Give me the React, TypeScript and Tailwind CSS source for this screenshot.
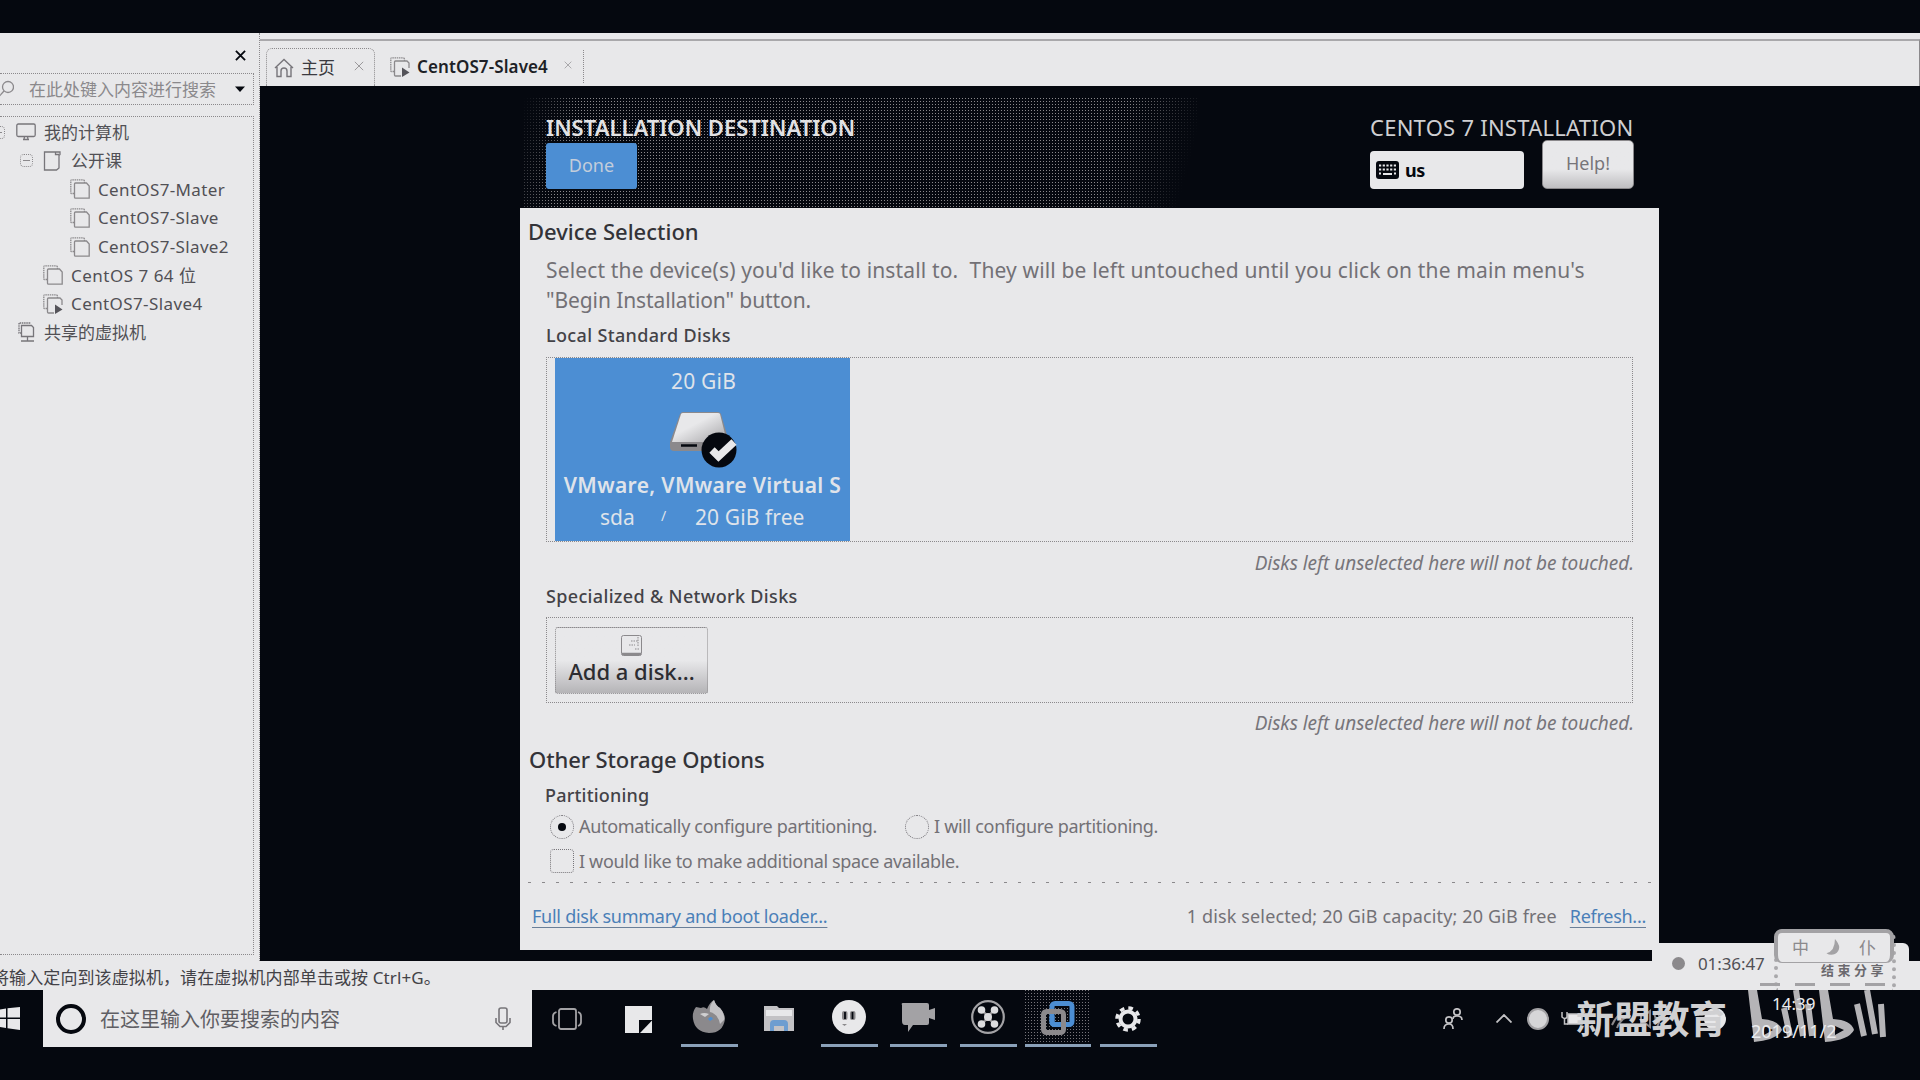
import type { ReactNode } from "react";

const Cross = ({ className }: { className: string }) => (
  <svg viewBox="0 0 12 12" className={className} fill="none" stroke="currentColor">
    <path d="M1 1 11 11M11 1 1 11" />
  </svg>
);

const VmIcon = ({ running = false }: { running?: boolean }) => (
  <svg viewBox="0 0 20 20" className="h-5 w-5 shrink-0" fill="none" stroke="#8b898c" strokeWidth="1.3">
    <path d="M4 14.5H1.5A.8.8 0 0 1 .8 13.7V1.5A.8.8 0 0 1 1.5.8H13A1.5 1.5 0 0 1 14.5 2.3V4" strokeDasharray="1.5 0.7" />
    <path d={running ? "M11 19H5.5a1 1 0 0 1-1-1V5a1 1 0 0 1 1-1H17l2 2v5" : "M5.5 4H16.5L19.2 7V19.2H5.5a1 1 0 0 1-1-1V5a1 1 0 0 1 1-1Z"} />
    {running && <path d="M12 10.5 19.500 15.5 12 20Z" fill="#55545a" stroke="none" />}
  </svg>
);

const ComputerIcon = () => (
  <svg viewBox="0 0 20 18" className="h-[18px] w-5 shrink-0" fill="none" stroke="#77757a" strokeWidth="1.3">
    <rect x=".8" y="1" width="18.4" height="12.5" rx="1.5" />
    <path d="M7 16.5H13M8.5 13.5 8 16.5M11.5 13.5 12 16.5" />
  </svg>
);

const FolderIcon = () => (
  <svg viewBox="0 0 18 20" className="h-5 w-[18px] shrink-0" fill="none" stroke="#77757a" strokeWidth="1.3">
    <path d="M12.5 1H1.5V19H13.5L16 17V4.5L17 3.5V1H12.5V3.5H16" />
  </svg>
);

const SharedIcon = () => (
  <svg viewBox="0 0 18 20" className="h-5 w-[18px] shrink-0" fill="none" stroke="#77757a" strokeWidth="1.3">
    <path d="M3.5 11H1V1H13" strokeDasharray="1.5 .7" />
    <path d="M3.5 3.5H13.5L15.5 5.5V14.5H3.5ZM9.5 14.5V18.5M3 19H16" />
  </svg>
);

const Expander = () => (
  <span className="flex h-[13px] w-[13px] shrink-0 items-center justify-center rounded-sm border border-dotted border-[#8b898c]">
    <span className="h-px w-[7px] bg-[#8b898c]" />
  </span>
);

const TreeRow = ({ indent, gap, icon, children }: { indent: string; gap: string; icon: ReactNode; children: ReactNode }) => (
  <div className={`flex h-[28.6px] items-center whitespace-nowrap ${indent} ${gap}`}>
    {icon}
    <span>{children}</span>
  </div>
);

function Sidebar() {
  return (
    <aside className="flex w-[260px] shrink-0 flex-col border-r border-dotted border-[#8b898c] text-[17px] text-[#515055]">
      <div className="flex h-10 items-end justify-end pr-[13px] pb-3 text-[#05080f]">
        <Cross className="h-[11px] w-[11px] stroke-2" />
      </div>
      <div className="mr-[5px] flex h-8 items-center border border-l-0 border-dotted border-[#8b898c] text-[#8b898c]">
        <svg viewBox="0 0 16 18" className="-ml-0.5 h-[18px] w-4" fill="none" stroke="currentColor" strokeWidth="1.3">
          <circle cx="10" cy="7" r="5.5" />
          <path d="M6 11 1 16.5" />
        </svg>
        <span className="mt-px flex-1 pl-[15px] whitespace-nowrap">在此处键入内容进行搜索</span>
        <svg viewBox="0 0 10 6" className="mr-2 h-1.5 w-2.5" fill="#05080f">
          <path d="M0 .5H10L5 6Z" />
        </svg>
      </div>
      <div className="mt-[11px] mr-[5px] mb-[6px] flex-1 border border-l-0 border-dotted border-[#8b898c] pt-px">
        <div className="-ml-2 flex items-center">
          <Expander />
          <TreeRow indent="pl-[11px]" gap="gap-2" icon={<ComputerIcon />}>我的计算机</TreeRow>
        </div>
        <div className="flex items-center pl-5">
          <Expander />
          <TreeRow indent="pl-[10px]" gap="gap-2.5" icon={<FolderIcon />}>公开课</TreeRow>
        </div>
        <TreeRow indent="pl-[70px]" gap="gap-2 tracking-[0.35px]" icon={<VmIcon />}>CentOS7-Mater</TreeRow>
        <TreeRow indent="pl-[70px]" gap="gap-2 tracking-[0.35px]" icon={<VmIcon />}>CentOS7-Slave</TreeRow>
        <TreeRow indent="pl-[70px]" gap="gap-2 tracking-[0.35px]" icon={<VmIcon />}>CentOS7-Slave2</TreeRow>
        <TreeRow indent="pl-[43px]" gap="gap-2 tracking-[0.5px]" icon={<VmIcon />}>CentOS 7 64 位</TreeRow>
        <TreeRow indent="pl-[43px]" gap="gap-2 tracking-[0.4px]" icon={<VmIcon running />}>CentOS7-Slave4</TreeRow>
        <TreeRow indent="pl-[18px]" gap="gap-2" icon={<SharedIcon />}>共享的虚拟机</TreeRow>
      </div>
    </aside>
  );
}

function TabBar() {
  return (
    <div className="mt-1.5 flex h-[47px] items-end border-t-2 border-r border-t-[#a9a8ab] border-r-[#8b898c] pl-[6px] text-[17px]">
      <div className="flex h-[38px] w-[109px] items-center rounded-t-md border border-b-0 border-dotted border-[#8b898c] pl-[7px] text-[#3b3a40]">
        <svg viewBox="0 0 20 20" className="h-5 w-5" fill="none" stroke="#77757a" strokeWidth="1.4">
          <path d="M1 10 10 1.5 19 10M3 9V18.5H7V13A3 3 0 0 1 13 13V18.5H17V9" />
        </svg>
        <span className="ml-[7px]">主页</span>
        <Cross className="mb-1 ml-[19px] h-2.5 w-2.5 text-[#8b898c]" />
      </div>
      <div className="mb-[3px] flex h-[33px] w-[209px] items-center border-r border-dotted border-[#8b898c] pl-[15px]">
        <VmIcon running />
        <span className="ml-[7px] font-semibold tracking-[0.1px] text-[#1d1f26]">CentOS7-Slave4</span>
        <Cross className="mb-1 ml-4 h-2 w-2 text-[#8b898c]" />
      </div>
    </div>
  );
}

function InstallerHeader() {
  return (
    <div className="relative h-[110px]">
      <div className="absolute inset-y-0 left-1 w-[675px] bg-[radial-gradient(circle_at_0.5px_0.5px,#8b898c_0.5px,transparent_0.6px)] bg-[size:3px_3px] [mask-image:linear-gradient(105deg,transparent_0,#000_8%,#000_86%,transparent_97%)]" />
      <div className="relative flex justify-between pt-4 pr-[25px] pl-[26px]">
        <div>
          <div className="text-[22px] leading-[26px] font-semibold text-[#e2e2e4]">INSTALLATION DESTINATION</div>
          <div className="mt-[3px] flex h-[46px] w-[91px] items-center justify-center rounded-[3px] bg-[#4c8ed3] pb-0.5 text-[18px] text-[#c3cddb]">Done</div>
        </div>
        <div className="w-[264px]">
          <div className="text-[22px] leading-[26px] tracking-[0.25px] whitespace-nowrap text-[#cfcfd2]">CENTOS 7 INSTALLATION</div>
          <div className="flex items-end justify-between">
            <div className="flex h-[38px] w-[154px] items-center gap-1.5 rounded-sm bg-[#e8e8ea] pl-[6px] text-[18px] font-bold text-[#05080f]">
              <svg viewBox="0 0 23 18" className="h-[18px] w-[23px]">
                <rect width="23" height="18" rx="3" fill="#05080f" />
                <path d="M3 4.5H20M3 8.5H20M3 12.5H5M18 12.5H20" stroke="#e8e8ea" strokeWidth="2" strokeDasharray="2.2 1.5" />
                <path d="M7 13H16" stroke="#e8e8ea" strokeWidth="2" />
              </svg>
              <span className="tracking-[-0.5px]">us</span>
            </div>
            <div className="flex h-[49px] w-[92px] items-center justify-center rounded-[5px] border border-[#8b898c] bg-linear-to-b from-[#e8e8ea] from-60% to-[#bfbec1] pb-0.5 text-[18px] text-[#77757a]">Help!</div>
          </div>
        </div>
      </div>
    </div>
  );
}

function DiskTile() {
  return (
    <div className="ml-2 flex h-full w-[295px] flex-col items-center bg-[#4c8ed3] text-[21px] text-[#dfe3ea]">
      <div className="mt-[9px] ml-0.5 leading-[28px] tracking-[0.2px]">20 GiB</div>
      <svg viewBox="0 0 68 58" className="mt-[16px] h-[58px] w-[68px]">
        <defs>
          <linearGradient id="lid" x1="0" y1="0" x2="1" y2="1">
            <stop offset="0.4" stopColor="#e8e8ea" />
            <stop offset="1" stopColor="#a3a2a5" />
          </linearGradient>
        </defs>
        <path d="M11 3Q12 1 14 1H49Q51 1 52 3L60 31V36Q60 40 56 40H5Q1 40 1 36V31Z" fill="#8b898c" />
        <path d="M12 3Q12.5 2 14 2H49Q50.5 2 51 3L58 31H3Z" fill="url(#lid)" />
        <path d="M12 34.5H28" stroke="#05080f" strokeWidth="2.5" />
        <circle cx="50" cy="39" r="17.5" fill="#05080f" />
        <path d="M43 39 49.5 45.500 65 31" fill="none" stroke="#e8e8ea" strokeWidth="7.5" />
      </svg>
      <div className="mt-px leading-[30px] font-semibold tracking-[0.35px]">VMware, VMware Virtual S</div>
      <div className="mt-[2px] flex w-full pl-[45px] leading-[30px]">
        <span className="w-[61px]">sda</span>
        <span className="w-[34px] text-[14px] leading-[28px]">/</span>
        <span className="tracking-[0.1px] whitespace-nowrap">20 GiB free</span>
      </div>
    </div>
  );
}

const UntouchedNote = ({ height }: { height: string }) => (
  <div className={`flex items-center justify-end pr-[25px] pb-px text-[19px] tracking-[-0.04px] text-[#77757a] italic ${height}`}>
    Disks left unselected here will not be touched.
  </div>
);

function Installer() {
  return (
    <div className="ml-[260px] w-[1139px] pt-3">
      <InstallerHeader />
      <div className="flex h-[742px] flex-col bg-[#e8e8ea] text-[#737176]">
        <h1 className="flex h-[46px] shrink-0 items-center pl-[8px] text-[22px] font-medium text-[#333338]">Device Selection</h1>
        <p className="mt-px pl-[26px] text-[21px] leading-[30px] whitespace-nowrap">
          <span className="tracking-[0.15px]">Select the device(s) you'd like to install to.&nbsp; They will be left untouched until you click on the main menu's</span>
          <br />
          <span className="tracking-[-0.1px]">"Begin Installation" button.</span>
        </p>
        <h2 className="flex h-10 shrink-0 items-center pl-[26px] text-[18px] font-medium tracking-[0.35px] text-[#434247]">Local Standard Disks</h2>
        <div className="mt-0.5 mr-[26px] ml-[26px] h-[185px] shrink-0 border border-dotted border-[#8b898c]">
          <DiskTile />
        </div>
        <UntouchedNote height="h-[44px]" />
        <h2 className="flex h-5 shrink-0 items-center pl-[26px] text-[18px] font-medium tracking-[0.34px] text-[#434247]">Specialized &amp; Network Disks</h2>
        <div className="mt-[11px] mr-[26px] ml-[26px] h-[86px] shrink-0 border border-dotted border-[#8b898c] pt-[9px] pl-2">
          <div className="flex h-[67px] w-[153px] flex-col items-center rounded-[3px] border border-dotted border-[#8b898c] bg-linear-to-b from-[#e8e8ea] from-50% to-[#b5b4b7]">
            <svg viewBox="0 0 21 21" className="mt-[7px] h-[21px] w-[21px]" fill="none" stroke="#8b898c">
              <rect x=".5" y=".5" width="20" height="20" rx="2" />
              <path d="M1 19H20" strokeWidth="2.5" />
              <path d="M10 6H17M8 10H14M14 14H18M17 2V12" strokeDasharray="1.5 1" />
            </svg>
            <span className="mt-px text-[22px] leading-[28px] font-medium text-[#2c2c31]">Add a disk...</span>
          </div>
        </div>
        <UntouchedNote height="h-[42px]" />
        <h1 className="flex h-[30px] shrink-0 items-center pb-0.5 pl-[9px] text-[22px] font-medium tracking-[-0.1px] text-[#333338]">Other Storage Options</h1>
        <h2 className="flex h-[40px] shrink-0 items-center pl-[25px] text-[18px] font-medium tracking-[0.2px] text-[#434247]">Partitioning</h2>
        <div className="flex h-6 shrink-0 items-center pl-[30px] text-[18px] whitespace-nowrap">
          <span className="flex h-6 w-6 items-center justify-center rounded-full border border-dotted border-[#77757a]">
            <span className="h-2 w-2 rounded-full bg-[#05080f]" />
          </span>
          <span className="ml-[5px] w-[326px] pb-px tracking-[-0.33px]">Automatically configure partitioning.</span>
          <span className="h-6 w-6 rounded-full border border-dotted border-[#77757a]" />
          <span className="ml-[5px] pb-px tracking-[-0.32px]">I will configure partitioning.</span>
        </div>
        <div className="mt-2.5 flex h-6 shrink-0 items-center pl-[30px] text-[18px]">
          <span className="h-6 w-6 rounded-[4px] border border-dotted border-[#77757a]" />
          <span className="ml-[5px] tracking-[-0.34px]">I would like to make additional space available.</span>
        </div>
        <div className="mt-[9px] ml-2 h-px shrink-0 bg-[repeating-linear-gradient(90deg,#8b898c_0_3px,transparent_3px_14px)]" />
        <div className="flex flex-1 items-center pr-[13px] pl-[12px] text-[18px]">
          <a className="tracking-[-0.26px] text-[#4a7fb8] underline decoration-[#6a7f98] decoration-1 underline-offset-4">Full disk summary and boot loader...</a>
          <span className="mr-[13px] ml-auto tracking-[0.14px]">1 disk selected; 20 GiB capacity; 20 GiB free</span>
          <a className="tracking-[-0.28px] text-[#4a7fb8] underline decoration-[#6a7f98] decoration-1 underline-offset-4">Refresh...</a>
        </div>
      </div>
    </div>
  );
}

const AppSlot = ({ width, active = false, focused = false, children }: { width: string; active?: boolean; focused?: boolean; children: ReactNode }) => (
  <div className={`flex h-[57px] shrink-0 flex-col items-center ${width}`}>
    <div className={`flex h-[54px] w-full items-center justify-center pt-1 ${focused ? "bg-[radial-gradient(circle_at_0.5px_0.5px,#77757a_0.5px,transparent_0.6px)] bg-[size:3px_3px]" : ""}`}>{children}</div>
    {active && <div className={`h-[3px] bg-[#8aa0b8] ${focused ? "w-full" : "w-[57px]"}`} />}
  </div>
);

function Taskbar() {
  return (
    <div className="flex h-[90px] items-start bg-[#05080f]">
      <div className="flex h-[57px] w-[43px] items-center">
        <svg viewBox="0 0 20 23" className="h-[23px] w-5" fill="#e8e8ea">
          <path d="M0 2.5 6 1.5V10.5H0ZM7.5 1.2 20 0V10.5H7.5ZM0 12H6V21L0 20ZM7.5 12H20V23L7.5 21.3Z" />
        </svg>
      </div>
      <div className="flex h-[57px] w-[489px] items-center bg-[#e8e8ea] pl-[13px]">
        <span className="h-[30px] w-[30px] rounded-full border-[4px] border-[#05080f]" />
        <span className="mt-0.5 ml-[14px] flex-1 text-[20px] text-[#5f5e63]">在这里输入你要搜索的内容</span>
        <svg viewBox="0 0 16 24" className="mr-[21px] h-6 w-4" fill="none" stroke="#77757a" strokeWidth="1.6">
          <rect x="4" y="1" width="8" height="15" rx="2" />
          <path d="M1 11V15.5L5 19.5H11L15 15.5V11M8 19.5V23" />
        </svg>
      </div>
      <AppSlot width="w-[69px]">
        <svg viewBox="0 0 30 22" className="h-[22px] w-[30px]" fill="none" stroke="#a3a2a5" strokeWidth="1.8">
          <rect x="7" y="1" width="17" height="20" rx="2" />
          <path d="M4.500 4Q1 5 1 8V14Q1 17 4.500 18M26 4Q29 5 29 8V14Q29 17 26 18" />
        </svg>
      </AppSlot>
      <AppSlot width="w-[75px]">
        <svg viewBox="0 0 27 27" className="h-[27px] w-[27px]">
          <path d="M0 0H27V14H14V27H0Z" fill="#e8e8ea" />
          <path d="M27 14.5V27H15Z" fill="#e8e8ea" />
        </svg>
      </AppSlot>
      <AppSlot width="w-[66px]" active>
        <svg viewBox="0 0 34 34" className="mb-1 h-[34px] w-[34px]">
          <path d="M4 7 9 8Q12 6 15 9Q18 2 22 0Q24 6 28 8Q33 14 33 19Q31 33 17 33Q3 32 1 19Q0 12 4 7Z" fill="#8b898c" />
          <path d="M22 0Q24 6 28 8Q33 14 32 20L28 24Q26 14 18 12Q17 5 22 0Z" fill="#c3c2c5" />
          <path d="M8 14Q12 12 17 14L13 17Z" fill="#d0d0d2" />
          <path d="M16 19Q19 15 21 19L18 21Z" fill="#4c8ed3" />
        </svg>
      </AppSlot>
      <AppSlot width="w-[73px]">
        <svg viewBox="0 0 30 26" className="h-[26px] w-[30px]">
          <path d="M0 0H13L15 2H30V25H0Z" fill="#c3c2c5" />
          <path d="M2 4H28V10H2Z" fill="#e8e8ea" />
          <path d="M6 25V18Q6 14 10 14H20Q24 14 24 18V25H20V20H10V25Z" fill="#6d9dd0" />
        </svg>
      </AppSlot>
      <AppSlot width="w-[68px]" active>
        <svg viewBox="0 0 34 34" className="mb-1 h-[34px] w-[34px]">
          <circle cx="17" cy="17" r="17" fill="#e8e8ea" />
          <rect x="10" y="11" width="5.5" height="9" rx="2" fill="#8b898c" />
          <rect x="18" y="11" width="5.5" height="9" rx="2" fill="#8b898c" />
          <path d="M13 12V19M20.5 12V19" stroke="#05080f" strokeWidth="1.8" />
          <path d="M10 24H15L12.5 26Z" fill="#8b898c" />
        </svg>
      </AppSlot>
      <AppSlot width="w-[71px]" active>
        <svg viewBox="0 0 35 29" className="mb-1 h-[29px] w-[35px]">
          <path d="M2 0H26Q28 0 28 2V7L34 5V17L28 15V20Q28 22 26 22H12L7 29V22H4Q1 22 1 18V2Q0 0 2 0Z" fill="#a3a2a5" />
        </svg>
      </AppSlot>
      <AppSlot width="w-[68px]" active>
        <svg viewBox="0 0 34 34" className="mb-1 h-[34px] w-[34px]">
          <circle cx="17" cy="17" r="15.8" fill="none" stroke="#a3a2a5" strokeWidth="2.2" />
          <path d="M10.5 9.5 17 16.5 23.5 9.5M10.5 24.5 17 17.5 23.5 24.5" fill="none" stroke="#8b898c" strokeWidth="2.5" />
          <g fill="#dcdcde">
            <circle cx="17" cy="17" r="4" />
            <circle cx="10.5" cy="10" r="3.8" />
            <circle cx="23.5" cy="10" r="3.8" />
            <circle cx="10.5" cy="24" r="3.8" />
            <circle cx="23.5" cy="24" r="3.8" />
          </g>
        </svg>
      </AppSlot>
      <AppSlot width="w-[66px] ml-[3px]" active focused>
        <svg viewBox="0 0 36 36" className="mb-0.5 h-9 w-9" fill="none" strokeWidth="5">
          <rect x="12" y="3.5" width="20" height="21" rx="3" stroke="#4c8ed3" />
          <rect x="3.5" y="11.5" width="20" height="21" rx="3" stroke="#8b898c" />
          <path d="M12 16V21.5Q12 24.5 15 24.5H20" stroke="#4c8ed3" />
        </svg>
      </AppSlot>
      <AppSlot width="w-[68px] ml-[3px]" active>
        <svg viewBox="0 0 26 26" className="h-[26px] w-[26px]">
          <circle cx="13" cy="13" r="7.5" fill="none" stroke="#e8e8ea" strokeWidth="4" />
          <circle cx="13" cy="13" r="11" fill="none" stroke="#e8e8ea" strokeWidth="3.5" strokeDasharray="4.6 4.04" />
        </svg>
      </AppSlot>
      <div className="ml-auto flex h-[57px] w-[477px] items-center text-[#c3c2c5]">
        <svg viewBox="0 0 20 22" className="h-[22px] w-5" fill="none" stroke="currentColor" strokeWidth="1.7">
          <circle cx="14" cy="4" r="3.2" />
          <circle cx="6" cy="12" r="3.2" />
          <path d="M10 11Q10 8 14 8Q19 8 19 12M1 21Q1 16 6 16Q10 16 10 21" />
        </svg>
        <svg viewBox="0 0 16 9" className="ml-[33px] h-[9px] w-4" fill="none" stroke="currentColor" strokeWidth="1.8">
          <path d="M.5 8.5 8 1 15.5 8.5" />
        </svg>
        <span className="ml-[15px] h-[22px] w-[22px] rounded-full border-2 border-[#a3a2a5] bg-[#d6d6d8]" />
        <svg viewBox="0 0 22 18" className="ml-3 h-[18px] w-[22px]" fill="none" stroke="currentColor" strokeWidth="1.5">
          <rect x="7" y="4" width="14" height="10" fill="#e8e8ea" />
          <path d="M1 2V7Q4 10 6 7V2M3.5 9V14H7" />
        </svg>
        <svg viewBox="0 0 50 22" className="ml-[28px] h-[22px] w-[50px]" fill="none" stroke="#8b898c" strokeWidth="2">
          <path d="M1 17Q8 2 20 2M6 20Q10 9 20 8M30 7V15H34L39 19V3L34 7ZM43 6Q46 11 43 16M46 3Q51 11 46 19" />
        </svg>
        <span className="ml-[43px] h-[22px] w-[22px] rounded-full bg-[#e8e8ea]" />
      </div>
    </div>
  );
}

/* Recorder time bar that floats over the virtual machine's lower right corner */
function RecorderBar() {
  return (
    <div className="absolute top-[943px] left-[1652px] flex h-[47px] w-[257px] items-start rounded-tr-md bg-[#e8e8ea] pl-5 text-[17px] text-[#515055]">
      <span className="mt-[14px] h-[13px] w-[13px] rounded-full bg-[#8b898c]" />
      <span className="mt-[9px] ml-[13px] leading-6 tracking-[-0.1px]">01:36:47</span>
      <span className="mt-[21px] ml-auto mr-[22px] text-[13px] leading-[13px] font-bold tracking-[3.5px] text-[#6b696e]">结束分享</span>
    </div>
  );
}

function Watermark() {
  return (
    <>
      <div className="absolute top-[995px] left-[1576px] text-[38px] leading-[46px] font-bold tracking-[-0.3px] whitespace-nowrap text-[#d0d0d2]">新盟教育</div>
      <div className="absolute top-[929px] left-[1774px] h-[61px] w-[122px] rounded-t-[10px] border-[4px] border-b-0 border-dotted border-[#a9a8ab]" />
      <div className="absolute top-[929px] left-[1774px] h-[34px] w-[120px] rounded-lg border-x-[4px] border-t-[4px] border-b border-[#a3a2a5] bg-[#e8e8ea]">
        <div className="flex h-full items-center justify-between px-[14px] text-[17px] leading-[20px] text-[#8b898c]">
          <span>中</span>
          <svg viewBox="0 0 16 18" className="h-[17px] w-4" fill="#a3a2a5">
            <path d="M9 0Q18 10 9 16Q4 18 0 15Q9 13 9 0Z" />
          </svg>
          <span>仆</span>
        </div>
      </div>
      <div className="absolute top-[983px] left-[1760px] h-[3px] w-[126px] bg-[repeating-linear-gradient(90deg,#a3a2a5_0_20px,transparent_20px_35px)]" />
      <svg viewBox="0 0 140 52" className="absolute top-[990px] left-[1747px] h-[52px] w-[140px]" fill="#b5b4b7" fillRule="evenodd" stroke="#b5b4b7">
        <path stroke="none" d="M1 0H10L15 29Q32 30 35 40Q30 50 7 52ZM17 36V45L26 40Z" />
        <path stroke="none" d="M72 0H81L86 29Q104 30 107 40Q102 50 78 52ZM88 36V45L97 40Z" />
        <path fill="none" strokeWidth="6" d="M37 18 43 46M49 0 56 46M61 14 65 46M110 14 117 46M120 0 128 44M134 14 136 47" />
      </svg>
      <div className="absolute top-[994px] left-[1772px] text-[17px] leading-5 text-[#ececee]">14:39</div>
      <div className="absolute top-[1021px] left-[1751px] text-[18px] leading-5 text-[#ececee]">2019/11/2</div>
    </>
  );
}

export default function App() {
  return (
    <div className="relative flex h-[1080px] w-[1920px] flex-col overflow-hidden bg-[#05080f] font-['Noto_Sans','Noto_Sans_CJK_SC',sans-serif]">
      <div className="mt-[33px] flex h-[928px] bg-[#e8e8ea]">
        <Sidebar />
        <main className="flex flex-1 flex-col">
          <TabBar />
          <div className="flex-1 bg-[#05080f]">
            <Installer />
          </div>
        </main>
      </div>
      <div className="flex h-[29px] items-center bg-[#e8e8ea] pt-1 text-[17px] leading-6 whitespace-nowrap text-[#434247]">
        <span className="-ml-2 tracking-[0.1px]">将输入定向到该虚拟机，请在虚拟机内部单击或按 Ctrl+G。</span>
      </div>
      <Taskbar />
      <RecorderBar />
      <Watermark />
    </div>
  );
}
